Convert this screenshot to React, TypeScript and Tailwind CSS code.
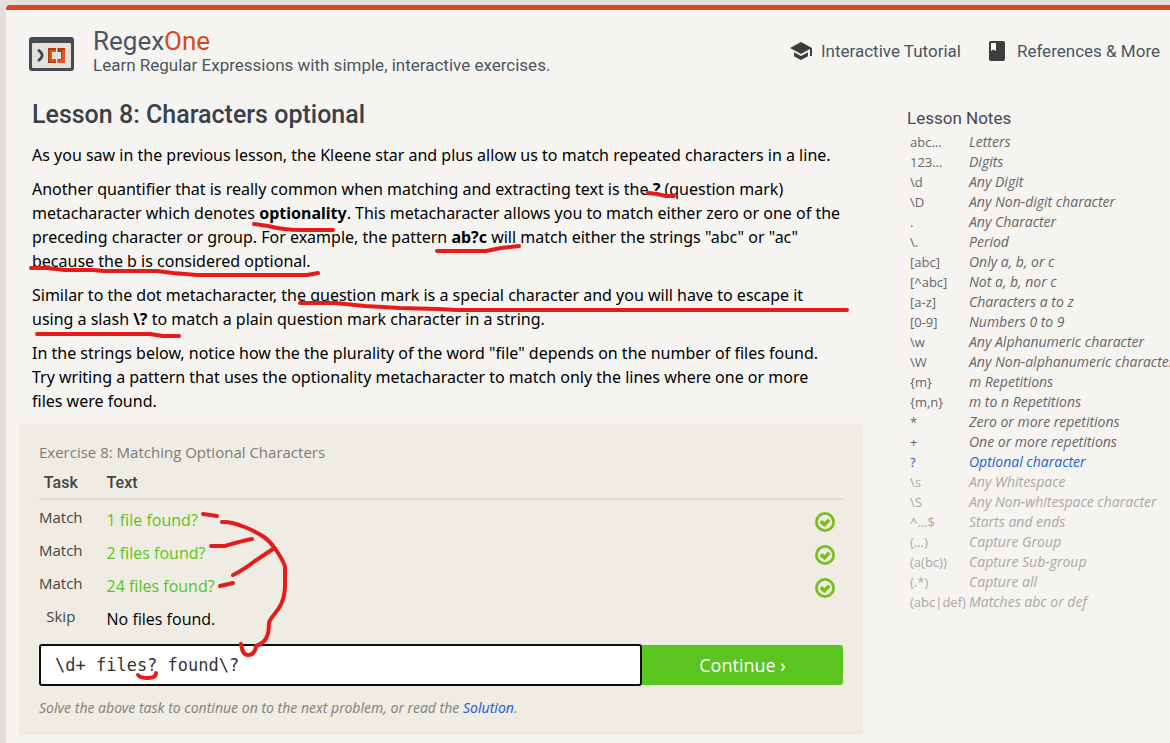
import React from "react";
import { MdClass, MdSchool } from "react-icons/md";

type NoteState = "learned" | "current" | "upcoming";

const notes: [string, string, NoteState][] = [
  ["abc…", "Letters", "learned"],
  ["123…", "Digits", "learned"],
  ["\\d", "Any Digit", "learned"],
  ["\\D", "Any Non-digit character", "learned"],
  [".", "Any Character", "learned"],
  ["\\.", "Period", "learned"],
  ["[abc]", "Only a, b, or c", "learned"],
  ["[^abc]", "Not a, b, nor c", "learned"],
  ["[a-z]", "Characters a to z", "learned"],
  ["[0-9]", "Numbers 0 to 9", "learned"],
  ["\\w", "Any Alphanumeric character", "learned"],
  ["\\W", "Any Non-alphanumeric character", "learned"],
  ["{m}", "m Repetitions", "learned"],
  ["{m,n}", "m to n Repetitions", "learned"],
  ["*", "Zero or more repetitions", "learned"],
  ["+", "One or more repetitions", "learned"],
  ["?", "Optional character", "current"],
  ["\\s", "Any Whitespace", "upcoming"],
  ["\\S", "Any Non-whitespace character", "upcoming"],
  ["^…$", "Starts and ends", "upcoming"],
  ["(…)", "Capture Group", "upcoming"],
  ["(a(bc))", "Capture Sub-group", "upcoming"],
  ["(.*)", "Capture all", "upcoming"],
  ["(abc|def)", "Matches abc or def", "upcoming"],
];

const noteColor: Record<NoteState, string> = {
  learned: "text-[#666666]",
  current: "text-[#1d5fd6]",
  upcoming: "text-[#a9a8a6]",
};

const tasks = [
  { task: "Match", text: "1 file found?", done: true },
  { task: "Match", text: "2 files found?", done: true },
  { task: "Match", text: "24 files found?", done: true },
  { task: "Skip", text: "No files found.", done: false },
];

function Logo() {
  return (
    <svg width="45" height="34" viewBox="0 0 45 34" aria-hidden="true">
      <rect width="45" height="34" rx="3" fill="#444b57" />
      <rect x="3" y="6" width="39" height="25" rx="1" fill="#e3e1d9" />
      <path d="M9 12.800c2.500 1.700 4 3.500 4.300 5.500-.3 2.200-1.800 4-4.300 5.700" fill="none" stroke="#3f4550" strokeWidth="2.600" />
      <path d="M19 11h8v4h-4v7h4v4h-8z" fill="#a63c17" />
      <path d="M20.500 13H27v2h-4v7h4v2.500h-6.500z" fill="#de5425" />
      <path d="M36 11h-7.500v4H32v7h-3.500v4H36z" fill="#a63c17" />
      <path d="M34.800 13h-1.800v9.800h-4.500V26H36V13z" fill="#de5425" />
    </svg>
  );
}

function CheckMark() {
  return (
    <svg width="20" height="20" viewBox="0 0 20 20" fill="none" stroke="#7cbc22" role="img" aria-label="Matched">
      <circle cx="10" cy="10" r="8.6" strokeWidth="2.8" />
      <path d="M5.700 9.300l3.700 3.400 4.900-5" strokeWidth="3.600" />
    </svg>
  );
}

function Annotations() {
  return (
    <svg
      className="pointer-events-none absolute top-0 left-0"
      width="870"
      height="743"
      viewBox="0 0 870 743"
      fill="none"
      stroke="#e81b1b"
      strokeWidth="4"
      strokeLinecap="round"
      strokeLinejoin="round"
      aria-hidden="true"
    >
      <path d="M648 193l9 1 9 2h8" />
      <path d="M254 224l14 2c12 3 20 4 32 4h33" />
      <path d="M437 251h49l15-3 18-2" />
      <path d="M31 268h16l18 2h28l11 1h53l16 2 24 2h110l11-2" />
      <path d="M300 303h35l30 3 35 2 37 1 20 1h390" />
      <path d="M37 334h113l13 2h16" />
      <path d="M203 514l14 2" />
      <path d="M222 522c13-1 35 10 42 15 10 7 20 25 21 30v18c0 25-15 30-16 38 0 14-4 20-13 23-1 9-6 9-8 9-6 0-6-7-7-11" />
      <path d="M211 546h14c10-3 16-5 27-7" />
      <path d="M273 549l-18 12c-8 6-14 10-22 14" />
      <path d="M220 586l13-3" />
      <path d="M138 675c2 3 6 3 10 3 6 0 8-2 8-5" />
    </svg>
  );
}

export default function App() {
  return (
    <div className="relative min-h-screen overflow-hidden bg-[#e3dedb] pt-[5px] pl-[6px] font-['Open_Sans',sans-serif] text-black">
      <div className="min-h-screen rounded-tl-sm border-t-[5px] border-[#d94724] bg-[#f6f4f1]">
        <header className="flex items-start justify-between pt-[17px] pr-[10px] pl-[23px] font-[Roboto,sans-serif] text-[#4a5563]">
          <a href="#home" className="flex items-start gap-[19px]">
            <span className="pt-[10px]">
              <Logo />
            </span>
            <span className="block">
              <span className="block text-[26px] leading-[28px]">
                Regex<span className="text-[#d94724]">One</span>
              </span>
              <span className="block text-[17px] leading-[20px]">
                Learn Regular Expressions with simple, interactive exercises.
              </span>
            </span>
          </a>
          <nav className="flex gap-6 pt-[12px] text-[17px] leading-[24px]">
            <a href="#tutorial" className="flex items-center gap-2">
              <MdSchool size={24} color="#3d3d3d" />
              Interactive Tutorial
            </a>
            <a href="#references" className="flex items-center gap-2">
              <MdClass size={24} color="#3d3d3d" />
              References &amp; More
            </a>
          </nav>
        </header>

        <div className="flex items-start gap-[44px] pt-[26px] pl-[13px]">
          <main className="w-[844px] shrink-0">
            <div className="pl-[13px] text-[16px] leading-[24px]">
              <h1 className="pb-[14px] font-[Roboto,sans-serif] text-[25px] leading-[28px] font-medium text-[#3a4049]">
                Lesson 8: Characters optional
              </h1>
              <div className="flex flex-col gap-[10px] font-['Noto_Sans',sans-serif] whitespace-nowrap">
                <p>
                  As you saw in the previous lesson, the Kleene star and plus allow us to match repeated characters in a line.
                </p>
                <p>
                  Another quantifier that is really common when matching and extracting text is the <b>?</b> (question mark)
                  <br />
                  metacharacter which denotes <b>optionality</b>. This metacharacter allows you to match either zero or one of the
                  <br />
                  preceding character or group. For example, the pattern <b>ab?c</b> will match either the strings "abc" or "ac"
                  <br />
                  because the b is considered optional.
                </p>
                <p>
                  Similar to the dot metacharacter, the question mark is a special character and you will have to escape it
                  <br />
                  using a slash <b>\?</b> to match a plain question mark character in a string.
                </p>
                <p>
                  In the strings below, notice how the the plurality of the word "file" depends on the number of files found.
                  <br />
                  Try writing a pattern that uses the optionality metacharacter to match only the lines where one or more
                  <br />
                  files were found.
                </p>
              </div>
            </div>

            <section className="mt-[11px] rounded-xs bg-[#efece4] px-[20px] pt-[17px] pb-[16px]">
              <h2 className="text-[15px] leading-[22px] text-[#7b7b79]">Exercise 8: Matching Optional Characters</h2>
              <table className="mt-[4px] w-full border-collapse">
                <thead>
                  <tr className="h-[32px] border-b-2 border-[#dcdcdc] font-[Roboto,sans-serif] text-[16px] leading-[24px] text-[#444444]">
                    <th className="w-[43px] p-0 text-center font-medium">Task</th>
                    <th className="p-0 pl-[24px] text-left font-medium">Text</th>
                    <th className="w-[28px] p-0" aria-label="Result" />
                  </tr>
                </thead>
                <tbody>
                  <tr className="h-[4px]" aria-hidden="true" />
                  {tasks.map((row) => (
                    <tr key={row.text} className="h-[33px] leading-[24px]">
                      <td className="p-0 pb-[5px] text-center text-[15px] text-[#444444]">{row.task}</td>
                      <td className={row.done ? "p-0 pl-[24px] text-[16px] text-[#5ac421]" : "p-0 pl-[24px] text-[16px] text-black"}>
                        {row.text}
                      </td>
                      <td className="p-0 pt-[4px]">{row.done && <CheckMark />}</td>
                    </tr>
                  ))}
                </tbody>
              </table>
              <form className="mt-[9px] flex items-center" onSubmit={(e) => e.preventDefault()}>
                <input
                  aria-label="Pattern"
                  defaultValue="\d+ files? found\?"
                  spellCheck={false}
                  className="h-[42px] min-w-0 grow rounded-[3px] border-2 border-[#101010] bg-white px-[14px] font-['DejaVu_Sans_Mono',monospace] text-[17px] text-[#333333] outline-none"
                />
                <button type="submit" className="h-[40px] w-[201px] rounded-r-[3px] bg-[#5ac421] text-[18px] text-white">
                  Continue ›
                </button>
              </form>
              <p className="mt-[11px] font-['Noto_Sans',sans-serif] text-[14px] leading-[22px] text-[#858583] italic">
                Solve the above task to continue on to the next problem, or read the{" "}
                <a href="#solution" className="text-[#1d5fd6]">
                  Solution
                </a>
                .
              </p>
            </section>
          </main>

          <aside className="shrink-0 pt-[3px]">
            <h2 className="font-[Roboto,sans-serif] text-[17px] leading-[28px] text-[#444a54]">Lesson Notes</h2>
            <table className="border-collapse text-[13px] leading-[20px] whitespace-nowrap">
              <tbody>
                {notes.map(([code, meaning, state]) => (
                  <tr key={code} className={noteColor[state]}>
                    <td className="w-[62px] min-w-[62px] p-0 pl-[3px]">{code}</td>
                    <td className="p-0 text-[14px] leading-[20px] italic">{meaning}</td>
                  </tr>
                ))}
              </tbody>
            </table>
          </aside>
        </div>
      </div>
      <Annotations />
    </div>
  );
}
